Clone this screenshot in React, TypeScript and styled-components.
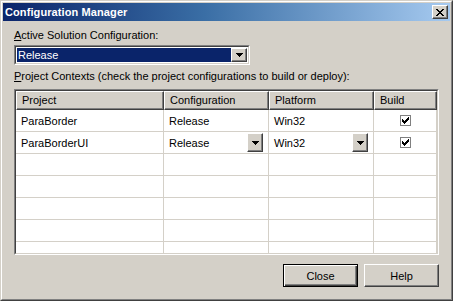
import * as React from 'react'
import styled, { createGlobalStyle } from 'styled-components'

const GlobalStyle = createGlobalStyle`
  html, body {
    margin: 0;
    padding: 0;
    background: #d4d0c8;
  }
  body {
    font-family: "Liberation Sans", Arial, sans-serif;
    font-size: 11px;
    color: #000;
  }
`

const Window = styled.div`
  box-sizing: border-box;
  width: 453px;
  height: 301px;
  background: #d4d0c8;
  border: 1px solid;
  border-color: #d4d0c8 #404040 #404040 #d4d0c8;
  display: flex;
  flex-direction: column;
`

const Frame = styled.div`
  flex: 1;
  display: flex;
  flex-direction: column;
  border: 1px solid;
  border-color: #ffffff #808080 #808080 #ffffff;
  padding: 1px;
  min-height: 0;
`

const TitleBar = styled.div`
  height: 18px;
  display: flex;
  align-items: center;
  justify-content: space-between;
  padding: 0 2px 0 2px;
  background: linear-gradient(to right, #0a246a 0%, #3a6ea5 45%, #a6caf0 100%);
`

const Title = styled.span`
  color: #fff;
  font-weight: bold;
  font-size: 11px;
  letter-spacing: 0.1px;
`

const RaisedButton = styled.div`
  box-sizing: border-box;
  background: #d4d0c8;
  border: 1px solid;
  border-color: #ffffff #404040 #404040 #ffffff;
  box-shadow: inset -1px -1px 0 #808080;
  display: flex;
  align-items: center;
  justify-content: center;
`

const CloseBox = styled(RaisedButton)`
  width: 16px;
  height: 14px;
`

const Body = styled.div`
  flex: 1;
  display: flex;
  flex-direction: column;
  padding: 8px 11px 0 11px;
`

const Label = styled.div`
  line-height: 13px;
  height: 13px;
`

const Key = styled.span`
  text-decoration: underline;
`

const Combo = styled.div`
  box-sizing: border-box;
  width: 236px;
  height: 20px;
  margin-top: 3px;
  border: 1px solid;
  border-color: #808080 #ffffff #ffffff #808080;
  display: flex;
`

const ComboInner = styled.div`
  flex: 1;
  display: flex;
  border: 1px solid;
  border-color: #404040 #d4d0c8 #d4d0c8 #404040;
  background: #fff;
  padding: 1px;
`

const ComboValue = styled.div`
  flex: 1;
  background: #0a246a;
  color: #fff;
  line-height: 14px;
  padding-left: 1px;
`

const DropButton = styled(RaisedButton)<{ $h: number }>`
  width: 16px;
  height: ${p => p.$h}px;
  flex: none;
`

const Arrow = () => (
  <svg width="7" height="4" viewBox="0 0 7 4">
    <path d="M0 0h7v1h-1v1h-1v1h-1v1h-1v-1h-1v-1h-1v-1h-1z" fill="#000" />
  </svg>
)

const SectionLabel = styled(Label)`
  margin-top: 5px;
`

const Grid = styled.div`
  box-sizing: border-box;
  margin-top: 6px;
  height: 166px;
  border: 1px solid;
  border-color: #808080 #ffffff #ffffff #808080;
`

const GridInner = styled.div`
  box-sizing: border-box;
  height: 100%;
  border: 1px solid;
  border-color: #404040 #d4d0c8 #d4d0c8 #404040;
  background: #fff;
  overflow: hidden;
`

const Row = styled.div`
  display: grid;
  grid-template-columns: 148px 105px 105px 63px 1fr;
`

const HeadCell = styled.div`
  box-sizing: border-box;
  height: 19px;
  background: #d4d0c8;
  border: 1px solid;
  border-color: #ffffff #404040 #404040 #ffffff;
  box-shadow: inset -1px -1px 0 #808080;
  padding-left: 5px;
  line-height: 16px;
  white-space: nowrap;
  overflow: hidden;
`

const Cell = styled.div<{ $center?: boolean }>`
  box-sizing: border-box;
  height: 22px;
  border-right: 1px solid #d4d0c8;
  border-bottom: 1px solid #d4d0c8;
  padding: 0 5px;
  display: flex;
  align-items: center;
  justify-content: ${p => (p.$center ? 'center' : 'space-between')};
  white-space: nowrap;
`

const Filler = styled.div`
  height: 22px;
  border-bottom: 1px solid #d4d0c8;
  box-sizing: border-box;
`

const HeadFiller = styled.div`
  height: 19px;
  background: #fff;
`

const Check = styled.div`
  box-sizing: border-box;
  width: 11px;
  height: 11px;
  border: 1px solid #808080;
  background: #fff;
  display: flex;
  align-items: center;
  justify-content: center;
`

const CheckMark = () => (
  <svg width="7" height="7" viewBox="0 0 7 7">
    <path d="M0 2h1v1h1v1h1v-1h1v-1h1v-1h1v-1h1v3h-1v1h-1v1h-1v1h-1v1h-1v-1h-1v-1h-1z" fill="#000" />
  </svg>
)

const Footer = styled.div`
  display: flex;
  justify-content: flex-end;
  gap: 6px;
  margin-top: 9px;
`

const PushButton = styled.div<{ $default?: boolean }>`
  box-sizing: border-box;
  width: 75px;
  height: 23px;
  display: flex;
  align-items: center;
  justify-content: center;
  background: #d4d0c8;
  border: 1px solid;
  border-color: ${p => (p.$default ? '#000' : '#ffffff #404040 #404040 #ffffff')};
  box-shadow: ${p =>
    p.$default
      ? 'inset 1px 1px 0 #ffffff, inset -1px -1px 0 #404040, inset -2px -2px 0 #808080'
      : 'inset -1px -1px 0 #808080'};
`

type Project = { name: string; config: string; platform: string; combo: boolean }

const projects: Project[] = [
  { name: 'ParaBorder', config: 'Release', platform: 'Win32', combo: false },
  { name: 'ParaBorderUI', config: 'Release', platform: 'Win32', combo: true },
]

const ValueCell = ({ text, combo }: { text: string; combo: boolean }) => (
  <Cell>
    <span>{text}</span>
    {combo && (
      <DropButton $h={19}>
        <Arrow />
      </DropButton>
    )}
  </Cell>
)

const App = () => {
  return (
    <>
      <GlobalStyle />
      <Window>
        <Frame>
          <TitleBar>
            <Title>Configuration Manager</Title>
            <CloseBox>
              <svg width="8" height="7" viewBox="0 0 8 7">
                <path
                  d="M0 0h2v1h1v1h2v-1h1v-1h2v1h-1v1h-1v1h-1v1h1v1h1v1h1v1h-2v-1h-1v-1h-2v1h-1v1h-2v-1h1v-1h1v-1h1v-1h-1v-1h-1v-1h-1z"
                  fill="#000"
                />
              </svg>
            </CloseBox>
          </TitleBar>
          <Body>
            <Label>
              <Key>A</Key>ctive Solution Configuration:
            </Label>
            <Combo>
              <ComboInner>
                <ComboValue>Release</ComboValue>
                <DropButton $h={14}>
                  <Arrow />
                </DropButton>
              </ComboInner>
            </Combo>
            <SectionLabel>
              <Key>P</Key>roject Contexts (check the project configurations to build or deploy):
            </SectionLabel>
            <Grid>
              <GridInner>
                <Row>
                  <HeadCell>Project</HeadCell>
                  <HeadCell>Configuration</HeadCell>
                  <HeadCell>Platform</HeadCell>
                  <HeadCell>Build</HeadCell>
                  <HeadFiller />
                </Row>
                {projects.map(p => (
                  <Row key={p.name}>
                    <Cell>{p.name}</Cell>
                    <ValueCell text={p.config} combo={p.combo} />
                    <ValueCell text={p.platform} combo={p.combo} />
                    <Cell $center>
                      <Check>
                        <CheckMark />
                      </Check>
                    </Cell>
                    <Filler />
                  </Row>
                ))}
                {[0, 1, 2, 3, 4].map(i => (
                  <Row key={i}>
                    <Cell />
                    <Cell />
                    <Cell />
                    <Cell />
                    <Filler />
                  </Row>
                ))}
              </GridInner>
            </Grid>
            <Footer>
              <PushButton $default>Close</PushButton>
              <PushButton>Help</PushButton>
            </Footer>
          </Body>
        </Frame>
      </Window>
    </>
  )
}

export default App
